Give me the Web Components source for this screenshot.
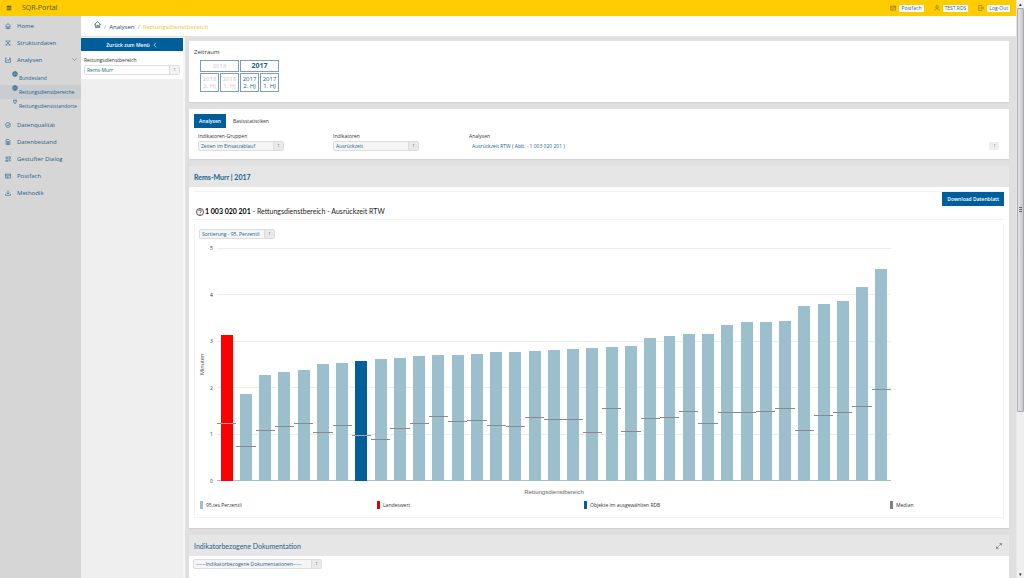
<!DOCTYPE html>
<html lang="de">
<head>
<meta charset="utf-8">
<title>SQR-Portal</title>
<style>
  html, body { margin: 0; height: 100%; }
  body {
    font: 5px/8px "Open Sans", "Noto Sans", sans-serif;
    color: #333;
    background: #e0e0e0;
    overflow: hidden;
    --blue: #005e9b;
    --ink: #1b5f8c;
    --yellow: #fecc00;
    --small: 5px;
    --normal: 6px;
    --large: 7px;
    --heading: Lato, "Open Sans", sans-serif;
  }
</style>
</head>
<body>
<sqr-app></sqr-app>
<script>
const ICONS = {
  menu: '<path fill="currentColor" stroke="none" d="M2 2h12v3H2zM2 6.500h12v3H2zM2 11h12v3H2z"/>',
  home: '<path d="M1 8 8 1.500 15 8M3 7v7.500h10V7M6.500 14v-4h3v4"/>',
  tools: '<path d="M2 2l12 12M14 2 2 14M1 4l3-3M12 15l3-3M12 1l3 3M1 12l3 3M8 1v3M8 12v3"/>',
  chart: '<path d="M1 3v11h14V5M1 3h4M4 10l3-3 3 2 5-6M11 3h4"/>',
  globe: '<circle cx="8" cy="8" r="6.500"/><path d="M1.500 8h13M8 1.500c-4 4-4 9 0 13M8 1.500c4 4 4 9 0 13M3 4.500h10M3 11.500h10"/>',
  pin: '<path d="M4 3h8v4l-4 6-4-6zM6 5h4"/>',
  check: '<circle cx="8" cy="8" r="6.500"/><path d="M5 8l2.500 3L12 5"/>',
  file: '<path d="M3 1.500h7l3 3v10H3zM5 7h6M5 9.500h6M5 12h6"/>',
  dialog: '<circle cx="5" cy="5" r="3"/><path d="M9 2h5v6H9M1 14c0-4 8-4 8 0zM10 11h4v3"/>',
  mail: '<path d="M1 3h14v10.500H1zM1 4l7 5 7-5M3 11h4"/>',
  download: '<path d="M8 1v9M4.500 7 8 10.500 11.500 7M1 10v4h14v-4"/>',
  user: '<circle cx="8" cy="5" r="3.500"/><path d="M2 15c0-7 12-7 12 0"/>',
  exit: '<path d="M10 4V1.500H2v13h8V12M6 8h9M12 5l3 3-3 3"/>',
  down: '<path d="M2 5l6 6 6-6"/>',
  left: '<path d="M11 2 5 8l6 6"/>',
  help: '<circle cx="8" cy="8" r="7"/><path d="M5.500 6.500c0-4 5-3 5 0 0 1.500-2.500 1.500-2.500 3.500M8 11.500v1.500"/>',
  expand: '<path d="M9 7l5-5M9.500 1.500H14.500V6.500M7 9l-5 5M1.500 9.500v5h5"/>'
};

const define = (name, html, setup) => {
  const template = document.createElement('template');
  template.innerHTML = html;
  customElements.define(name, class extends HTMLElement {
    connectedCallback() {
      if (this.shadowRoot) return;
      const root = this.attachShadow({ mode: 'open' });
      root.append(template.content.cloneNode(true));
      if (setup) setup(this, root);
    }
  });
};

define('sqr-icon', `
  <style>
    :host { display: inline-block; width: 6px; height: 6px; flex: none; }
    svg { display: block; width: 100%; height: 100%; fill: none; stroke: currentColor; stroke-width: 1.6; }
  </style>
  <svg viewBox="0 0 16 16" aria-hidden="true"></svg>`,
  (el, root) => { root.querySelector('svg').innerHTML = ICONS[el.getAttribute('name')]; });

define('sqr-header', `
  <style>
    :host { display: flex; align-items: center; height: 16px; padding: 0 6px; background: var(--yellow); }
    button { all: unset; display: flex; color: #4a5b1d; }
    h1 { font-size: var(--large); font-weight: 400; margin: 0 auto 0 10px; color: #4d5a35; }
    a { display: flex; align-items: center; gap: 3px; margin-left: 10px; color: #7a6a1c; text-decoration: none; }
    span { background: #fff; color: var(--ink); padding: 0 2px; border-radius: 1px; height: 7px; line-height: 7px; }
  </style>
  <button aria-label="Menü"><sqr-icon name="menu"></sqr-icon></button>
  <h1>SQR-Portal</h1>
  <a href="#"><sqr-icon name="mail"></sqr-icon><span>Postfach</span></a>
  <a href="#"><sqr-icon name="user"></sqr-icon><span>TEST.RDS</span></a>
  <a href="#"><sqr-icon name="exit"></sqr-icon><span>Log-Out</span></a>`);

define('sqr-nav-item', `
  <style>
    :host { display: block; font-size: var(--normal); font-weight: 500; color: var(--ink); }
    a { display: flex; align-items: center; gap: 6px; height: 17px; padding: 0 4px 0 5px; color: inherit; text-decoration: none; }
    .more { margin-left: auto; width: 5px; height: 5px; }
    :host([sub]) { font-size: var(--small); font-weight: 400; }
    :host([sub]) a { height: 14px; gap: 1px; padding: 0 0 0 12px; white-space: nowrap; }
    :host([sub]) sqr-icon { align-self: flex-start; }
    :host([active]) { background: #c9cdd0; }
  </style>
  <a href="#"><slot></slot></a>`,
  (el, root) => {
    const link = root.querySelector('a');
    link.insertAdjacentHTML('afterbegin', `<sqr-icon name="${el.getAttribute('icon')}"></sqr-icon>`);
    if (el.hasAttribute('open')) link.insertAdjacentHTML('beforeend', '<sqr-icon class="more" name="down"></sqr-icon>');
  });

define('sqr-nav', `
  <style>
    :host { display: block; background: #d6d6d6; padding-top: 1px; }
    .sub { padding: 3px 0; }
  </style>
  <sqr-nav-item icon="home">Home</sqr-nav-item>
  <sqr-nav-item icon="tools">Strukturdaten</sqr-nav-item>
  <sqr-nav-item icon="chart" open>Analysen</sqr-nav-item>
  <div class="sub">
    <sqr-nav-item sub icon="globe">Bundesland</sqr-nav-item>
    <sqr-nav-item sub active icon="globe">Rettungsdienstbereiche</sqr-nav-item>
    <sqr-nav-item sub icon="pin">Rettungsdienststandorte</sqr-nav-item>
  </div>
  <sqr-nav-item icon="check">Datenqualität</sqr-nav-item>
  <sqr-nav-item icon="file">Datenbestand</sqr-nav-item>
  <sqr-nav-item icon="dialog">Gestufter Dialog</sqr-nav-item>
  <sqr-nav-item icon="mail">Postfach</sqr-nav-item>
  <sqr-nav-item icon="download">Methodik</sqr-nav-item>`);

define('sqr-breadcrumb', `
  <style>
    :host { display: flex; align-items: center; gap: 3px; height: 21px; padding: 1px 0 0 13px; background: #fff; font-size: var(--normal); color: #999; border-bottom: 1px solid #e4e4e4; box-sizing: border-box; }
    a { color: #17486b; text-decoration: none; font-weight: 500; }
    a[aria-current] { color: #f0d264; font-weight: 600; }
    .home { display: flex; padding-bottom: 4px; }
    .home sqr-icon { width: 7px; height: 7px; }
  </style>
  <a class="home" href="#" aria-label="Home"><sqr-icon name="home"></sqr-icon></a>
  <span>/</span><a href="#">Analysen</a><span>/</span><a href="#" aria-current="page">Rettungsdienstbereich</a>`);

define('sqr-select', `
  <style>
    :host { display: block; }
    label { display: block; padding-bottom: 1px; }
    .box { display: flex; box-sizing: border-box; height: 10px; border: 1px solid #ddd; border-radius: 2px; background: #f5f5f5; overflow: hidden; }
    select { all: unset; flex: 1; min-width: 0; padding-left: 2px; line-height: 8px; color: var(--ink); white-space: nowrap; }
    .arrow { width: 9px; border-left: 1px solid #ddd; background: #e9e9e9; color: #777; text-align: center; line-height: 7px; pointer-events: none; }
    :host([plain]) .box { border-color: transparent; background: none; }
    :host([plain]) .arrow { border-color: transparent; background: #eee; }
    :host([light]) .box { background: #fff; }
    :host([light]) .arrow { background: #f3f3f3; }
  </style>
  <label for="s"></label>
  <div class="box"><select id="s"><option></option></select><span class="arrow" aria-hidden="true">↕</span></div>`,
  (el, root) => {
    const label = el.getAttribute('label');
    if (label) root.querySelector('label').textContent = label;
    else { root.querySelector('label').remove(); root.querySelector('select').setAttribute('aria-label', el.getAttribute('value')); }
    root.querySelector('option').textContent = el.getAttribute('value');
  });

define('sqr-filter', `
  <style>
    :host { display: block; background: #efefef; padding-top: 1px; border-right: 2px solid #f6f6f6; }
    button { all: unset; display: flex; align-items: center; justify-content: center; gap: 2px; width: 100%; height: 13px; background: var(--blue); color: #fff; font-weight: 600; }
    div { background: #fff; padding: 5px 3px 4px; }
  </style>
  <button>Zurück zum Menü <sqr-icon name="left"></sqr-icon></button>
  <div><sqr-select light label="Rettungsdienstbereich" value="Rems-Murr"></sqr-select></div>`);

define('sqr-card', `
  <style>
    :host { display: block; background: #fff; box-shadow: 0 1px 1px #d2d2d2; }
    header { display: flex; align-items: center; justify-content: space-between; height: 21px; padding: 0 7px 0 5px; background: #e6e6e6; font-family: var(--heading); font-size: var(--large); color: var(--ink); }
    h2 { font-size: inherit; font-weight: inherit; margin: 0; }
    :host([strong]) h2 { font-weight: 700; }
    button { all: unset; display: flex; color: #44606f; }
  </style>
  <header hidden><h2></h2></header><slot></slot>`,
  (el, root) => {
    const header = root.querySelector('header');
    const title = el.getAttribute('heading');
    if (!title) { header.remove(); return; }
    header.hidden = false;
    root.querySelector('h2').textContent = title;
    if (el.hasAttribute('expandable')) header.insertAdjacentHTML('beforeend', '<button aria-label="Vergrößern"><sqr-icon name="expand"></sqr-icon></button>');
  });

define('sqr-period', `
  <style>
    :host { display: block; padding: 7px 5px 10px; font-size: var(--normal); }
    .grid { display: inline-grid; grid-template-columns: repeat(4, 19px); grid-template-rows: 12px 19px; gap: 1px; margin: 4px 0 0 6px; vertical-align: top; }
    button { all: unset; box-sizing: border-box; border: 1px solid #7f9cc4; text-align: center; line-height: 7px; color: #ccc; padding-top: 1px; }
    .year { grid-column: span 2; line-height: 10px; padding: 0; }
    .on { color: var(--ink); }
    .year.on { font-size: var(--large); font-weight: 700; }
  </style>
  <div>Zeitraum</div>
  <div class="grid">
    <button class="year">2018</button><button class="year on">2017</button>
    <button>2018<br>2. HJ</button><button>2018<br>1. HJ</button>
    <button class="on">2017<br>2. HJ</button><button class="on">2017<br>1. HJ</button>
  </div>`);

define('sqr-indicators', `
  <style>
    :host { display: block; padding: 5px 5px 8px; }
    nav { display: flex; gap: 7px; }
    button { all: unset; height: 14px; line-height: 14px; }
    button.on { background: var(--blue); color: #fff; font-weight: 600; padding: 0 5px; }
    .row { display: grid; grid-template-columns: 135px 136px 1fr; padding: 4px 4px 0; }
    .row sqr-select { width: 86px; }
    .row sqr-select:last-child { width: auto; }
  </style>
  <nav><button class="on">Analysen</button><button>Basisstatistiken</button></nav>
  <div class="row">
    <sqr-select label="Indikatoren-Gruppen" value="Zeiten im Einsatzablauf"></sqr-select>
    <sqr-select label="Indikatoren" value="Ausrückzeit"></sqr-select>
    <sqr-select plain label="Analysen" value="Ausrückzeit RTW ( Abb. - 1 003 020 201 )"></sqr-select>
  </div>`);

define('sqr-chart', `
  <style>
    :host { display: grid; grid-template-columns: 8px 7px 1fr; column-gap: 2px; padding: 0 112px 0 3px; }
    .unit { writing-mode: vertical-rl; transform: rotate(180deg); text-align: center; line-height: 8px; color: #555; font-family: "Liberation Sans", sans-serif; font-size: var(--normal); }
    .scale { display: flex; flex-direction: column; justify-content: space-between; margin: -4px 0; text-align: center; }
    svg { display: block; width: 100%; height: 233px; overflow: visible; shape-rendering: crispEdges; }
    .axis { grid-column: 3; text-align: center; padding-top: 7px; color: #666; font-family: "Liberation Sans", sans-serif; font-size: var(--normal); }
  </style>
  <div class="unit">Minuten</div>
  <div class="scale"><span>5</span><span>4</span><span>3</span><span>2</span><span>1</span><span>0</span></div>
  <svg viewBox="0 0 675 233" preserveAspectRatio="none" role="img" aria-label="95.tes Perzentil und Median je Rettungsdienstbereich"></svg>
  <div class="axis">Rettungsdienstbereich</div>`,
  (el, root) => {
    const p95 = [3.14,1.87,2.28,2.35,2.38,2.52,2.54,2.58,2.62,2.64,2.69,2.72,2.72,2.74,2.77,2.77,2.79,2.81,2.84,2.86,2.88,2.91,3.07,3.12,3.17,3.17,3.36,3.41,3.41,3.44,3.76,3.80,3.87,4.18,4.56];
    const median = [1.23,.74,1.08,1.16,1.22,1.03,1.18,.96,.88,1.11,1.23,1.38,1.26,1.30,1.19,1.16,1.36,1.32,1.32,1.04,1.54,1.06,1.34,1.36,1.49,1.22,1.47,1.46,1.49,1.54,1.08,1.39,1.46,1.59,1.95];
    const y = v => 233 - v * 46.5;
    const step = 675 / p95.length;
    let out = '';
    for (let v = 0; v <= 5; v++) out += `<rect x="0" y="${y(v) - 1}" width="675" height="1" fill="${v ? '#ececec' : '#b5bcc0'}"/>`;
    p95.forEach((v, i) => {
      const fill = i === 0 ? '#ff0000' : i === 7 ? '#005e9b' : '#9bbfcd';
      out += `<rect x="${i * step + 3.6}" y="${y(v)}" width="12" height="${v * 46.5}" fill="${fill}"/>`;
    });
    median.forEach((v, i) => {
      out += `<rect x="${i * step}" y="${y(v) - 1}" width="${step}" height="1" fill="#8a8a8a"/>`;
      if (i === 0 || i === 7) out += `<rect x="${i * step + 3.6}" y="${y(v) - 1}" width="12" height="1" fill="#b9a5a5"/>`;
    });
    root.querySelector('svg').innerHTML = out;
  });

define('sqr-legend', `
  <style>
    :host { display: grid; grid-template-columns: 177fr 207fr 306fr 113fr; padding: 5px 0 8px 5px; }
    span { display: flex; align-items: center; gap: 3px; }
    i { width: 3px; height: 8px; background: var(--key); }
  </style>
  <span style="--key:#9bbfcd"><i></i>95.tes Perzentil</span>
  <span style="--key:#e00000"><i></i>Landeswert</span>
  <span style="--key:#005e9b"><i></i>Objekte im ausgewählten RDB</span>
  <span style="--key:#808080"><i></i>Median</span>`);

define('sqr-report', `
  <style>
    :host { display: block; padding: 4px 5px 10px; }
    .actions { display: flex; justify-content: flex-end; border-top: 1px solid #f3f3f3; }
    .actions button { all: unset; height: 14px; line-height: 14px; padding: 0 5px; background: var(--blue); color: #fff; font-weight: 600; }
    h3 { display: flex; align-items: center; gap: 1px; margin: 0; padding: 0 2px 2px; font-family: var(--heading); font-size: var(--large); line-height: 11px; font-weight: 400; color: #222; border-bottom: 1px solid #eee; white-space: nowrap; }
    h3 sqr-icon { width: 8px; height: 8px; }
    b { color: #000; }
    .sort { width: 76px; margin: 4px 4px 0; padding: 5px 0 9px; }
    .panel { border: 1px solid #f3f3f3; border-width: 0 1px 1px; }
  </style>
  <div class="actions"><button>Download Datenblatt</button></div>
  <h3><sqr-icon name="help"></sqr-icon><span><b>1 003 020 201</b> - Rettungsdienstbereich - Ausrückzeit RTW</span></h3>
  <div class="panel">
    <sqr-select class="sort" value="Sortierung - 95. Perzentil"></sqr-select>
    <sqr-chart></sqr-chart>
    <sqr-legend></sqr-legend>
  </div>`);

define('sqr-scrollbar', `
  <style>
    :host { display: flex; flex-direction: column; background: #eee; color: #222; border-left: 1px solid #e8e8e8; }
    span { height: 8px; line-height: 8px; text-align: center; background: #f2f2f2; }
    .thumb { display: flex; align-items: center; justify-content: center; flex: 403; background: linear-gradient(90deg, #e6e6ea, #c5c5cc); border: 1px solid #aaa; border-radius: 1px; }
    .rest { flex: 159; }
    svg { width: 3px; height: 5px; }
  </style>
  <span>▴</span>
  <div class="thumb"><svg viewBox="0 0 3 5"><path d="M0 0h3v1H0zM0 2h3v1H0zM0 4h3v1H0z" fill="#666"/></svg></div>
  <div class="rest"></div><span>▾</span>`);

define('sqr-app', `
  <style>
    :host { display: grid; grid-template-columns: 1fr 8px; height: 100vh; }
    .page { display: grid; grid-template-rows: 16px 1fr; min-width: 0; min-height: 0; }
    .body { display: grid; grid-template-columns: 81px 1fr; min-height: 0; }
    .work { display: grid; grid-template: 21px 1fr / 104px 1fr; min-height: 0; }
    sqr-breadcrumb { grid-column: 1 / -1; }
    main { display: flex; flex-direction: column; gap: 7px; padding: 4px 7px 0 4px; min-height: 0; overflow: hidden; background: #e0e0e0; }
    sqr-card { flex: none; }
    .docs { width: 129px; padding: 3px 4px 20px; }
  </style>
  <div class="page">
    <sqr-header></sqr-header>
    <div class="body">
      <sqr-nav></sqr-nav>
      <div class="work">
        <sqr-breadcrumb></sqr-breadcrumb>
        <sqr-filter></sqr-filter>
        <main>
          <sqr-card><sqr-period></sqr-period></sqr-card>
          <sqr-card><sqr-indicators></sqr-indicators></sqr-card>
          <sqr-card strong heading="Rems-Murr | 2017"><sqr-report></sqr-report></sqr-card>
          <sqr-card expandable heading="Indikatorbezogene Dokumentation"><sqr-select class="docs" value="------Indikatorbezogene Dokumentationen-----"></sqr-select></sqr-card>
        </main>
      </div>
    </div>
  </div>
  <sqr-scrollbar></sqr-scrollbar>`);
</script>
</body>
</html>
